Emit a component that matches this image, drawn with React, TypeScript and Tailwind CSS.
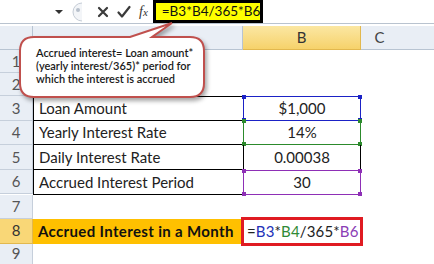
import React from "react";

const rows = [
  { n: 1, h: "h-[23px]" },
  { n: 2, h: "h-[23px]" },
  { n: 3, h: "h-[25px]" },
  { n: 4, h: "h-[24px]" },
  { n: 5, h: "h-[25px]" },
  { n: 6, h: "h-[24px]" },
  { n: 7, h: "h-[24px]" },
  { n: 8, h: "h-[25px]" },
  { n: 9, h: "h-[21px]" },
];

function Handles({ color }: { color: string }) {
  // little square grips on the corners of a referenced range
  return (
    <>
      <span className={`absolute -left-[2px] -top-[2px] w-[4px] h-[4px] ${color}`} />
      <span className={`absolute -right-[2px] -top-[2px] w-[4px] h-[4px] ${color}`} />
      <span className={`absolute -left-[2px] -bottom-[2px] w-[4px] h-[4px] ${color}`} />
      <span className={`absolute -right-[2px] -bottom-[2px] w-[4px] h-[4px] ${color}`} />
    </>
  );
}

function CellA({ n }: { n: number }) {
  const labels: Record<number, string> = {
    3: "Loan Amount",
    4: "Yearly Interest Rate",
    5: "Daily Interest Rate",
    6: "Accrued Interest Period",
  };
  if (n === 8) {
    return (
      <div className="bg-[#ffc000] flex items-center pl-[5px] font-bold text-[15px] tracking-[0.35px] text-[#111] whitespace-nowrap">
        Accrued Interest in a Month
      </div>
    );
  }
  if (labels[n]) {
    return (
      <div className={`flex items-center pl-[5px] text-[15px] text-[#222] border-l border-b border-black ${n === 3 ? "border-t" : ""}`}>
        {labels[n]}
      </div>
    );
  }
  return <div />;
}

function CellB({ n }: { n: number }) {
  const base = "relative flex items-center justify-center text-[15px] text-[#222]";
  if (n === 3)
    return (
      <div className={`${base} border border-[#1b22c6]`}>
        $1,000
        <Handles color="bg-[#1b22c6]" />
      </div>
    );
  if (n === 4)
    return (
      <div className={`${base} border-x border-b border-[#2c8a2c]`}>
        14%
        <Handles color="bg-[#2c8a2c]" />
      </div>
    );
  if (n === 5) return <div className={`${base} border-x border-black`}>0.00038</div>;
  if (n === 6)
    return (
      <div className={`${base} border border-[#8e2fb6]`}>
        30
        <Handles color="bg-[#8e2fb6]" />
      </div>
    );
  if (n === 8)
    return (
      <div className="relative flex items-center pl-[4px] text-[15px] tracking-[0.15px] text-[#222] whitespace-nowrap">
        <span className="absolute -inset-[2px] border-[3px] border-[#e01b22]" />
        <span>=</span>
        <span className="text-[#2231b8]">B3</span>
        <span>*</span>
        <span className="text-[#2f8a36]">B4</span>
        <span>/365*</span>
        <span className="text-[#8a3db5]">B6</span>
        <span className="w-px h-[17px] bg-black ml-px" />
      </div>
    );
  return <div />;
}

export default function App() {
  return (
    <div className="relative w-[434px] h-[264px] overflow-hidden bg-white" style={{ fontFamily: "Lato, 'Open Sans', sans-serif" }}>
      {/* formula bar */}
      <div className="h-[24px] flex items-center border-b border-[#b9c3cf] bg-white">
        <div className="w-[54px]" />
        <svg width="10" height="6" viewBox="0 0 10 6" className="mr-[5px]">
          <path d="M1 1 L9 1 L5 5 Z" fill="#333" />
        </svg>
        <svg width="14" height="20" viewBox="0 0 14 20">
          <path d="M13 1 A9 9 0 0 0 13 19" fill="#f3f5f8" stroke="#c5ccd6" />
          <circle cx="9" cy="8" r="2" fill="#b8c0cc" />
        </svg>
        <div className="w-[14px]" />
        <svg width="12" height="12" viewBox="0 0 12 12">
          <path d="M2 2 L10 10 M10 2 L2 10" stroke="#3a3a3a" strokeWidth="2.2" strokeLinecap="round" />
        </svg>
        <div className="w-[8px]" />
        <svg width="14" height="14" viewBox="0 0 14 14">
          <path d="M1.5 7.5 L5 11.5 L12.5 2" stroke="#3a3a3a" strokeWidth="2.2" fill="none" strokeLinecap="round" strokeLinejoin="round" />
        </svg>
        <span className="ml-[8px] italic text-[14px] text-[#333]" style={{ fontFamily: "'Liberation Serif', serif" }}>
          f<span className="text-[11px]">x</span>
        </span>
        <div className="ml-[5px] h-[23px] w-[110px] bg-[#ffff00] border-[3px] border-black flex items-center pl-[6px] text-[13.5px] text-[#111] whitespace-nowrap overflow-hidden">
          =B3*B4/365*B6
        </div>
      </div>

      {/* sheet */}
      <div className="mt-[2px] grid grid-cols-[33px_210px_118px_1fr]">
        <div className="h-[24px] bg-[#e9eef5] border-r border-b border-[#b8c4d2] relative">
          <svg width="8" height="8" viewBox="0 0 8 8" className="absolute right-[3px] bottom-[3px]">
            <path d="M8 0 L8 8 L0 8 Z" fill="#c9d0da" />
          </svg>
        </div>
        <div className="h-[24px] bg-[#e9eef5] border-r border-b border-[#b8c4d2]" />
        <div className="h-[24px] bg-gradient-to-b from-[#fbe7a2] to-[#f6d26a] border-r border-b border-[#e2b84e] flex items-center justify-center text-[15px] text-[#333]">
          B
        </div>
        <div className="h-[24px] bg-[#e9eef5] border-b border-[#b8c4d2] flex items-center justify-center text-[15px] text-[#444] pr-[36px]">
          C
        </div>

        {rows.map((r) => (
          <React.Fragment key={r.n}>
            <div
              className={`${r.h} flex items-center justify-center text-[15px] border-r border-b ${
                r.n === 8 ? "bg-[#f9d777] border-[#e2b84e] text-[#333]" : "bg-[#e9eef5] border-[#c6cfdb] text-[#555]"
              }`}
            >
              {r.n}
            </div>
            <CellA n={r.n} />
            <CellB n={r.n} />
            <div />
          </React.Fragment>
        ))}
      </div>

      {/* callout */}
      <div className="absolute left-[18px] top-[20px] w-[190px] h-[82px]">
        <svg width="190" height="82" viewBox="18 20 190 82" className="absolute inset-0 drop-shadow-[2px_3px_2px_rgba(0,0,0,0.35)]">
          <path
            d="M34 37 L130 37 L172 23 L152 37 L190 37 Q204 37 204 51 L204 83 Q204 97 190 97 L34 97 Q20 97 20 83 L20 51 Q20 37 34 37 Z"
            fill="#ffffff"
            stroke="#c0504d"
            strokeWidth="2"
          />
        </svg>
        <div className="absolute left-[18px] top-[26px] text-[11px] leading-[13px] font-semibold text-[#1a1a1a] whitespace-nowrap">
          <div>Accrued interest= Loan amount*</div>
          <div>(yearly interest/365)* period for</div>
          <div>which the interest is accrued</div>
        </div>
      </div>
    </div>
  );
}
